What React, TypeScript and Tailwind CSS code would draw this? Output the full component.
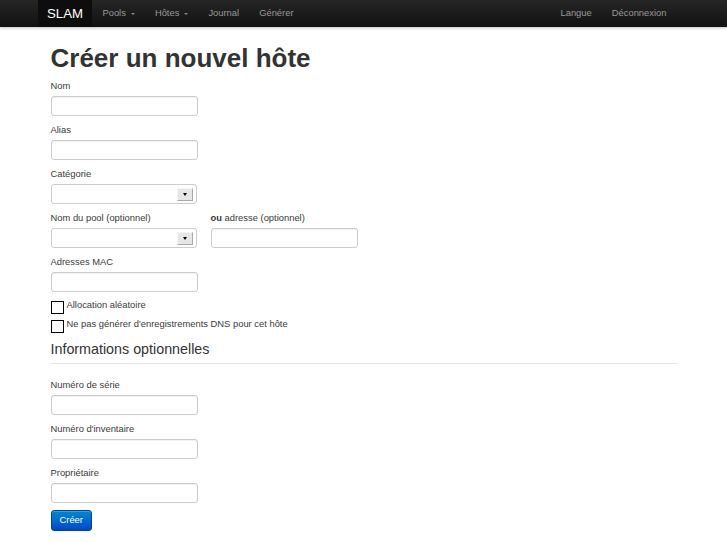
const navLeft = [
  { label: "Pools", caret: true },
  { label: "Hôtes", caret: true },
  { label: "Journal", caret: false },
  { label: "Générer", caret: false },
];

const navRight = ["Langue", "Déconnexion"];

const Caret = () => (
  <span className="ml-[5px] inline-block w-0 h-0 border-x-[2px] border-x-transparent border-t-[2px] border-t-[#888] mt-[1px]" />
);

const Label = ({ children }: { children: React.ReactNode }) => (
  <label className="block text-[9.4px] leading-[13px] mb-[4px] text-[#3a3a3a]">{children}</label>
);

const TextInput = () => (
  <input
    type="text"
    className="block w-[147px] h-[20px] border border-[#ccc] rounded-[3px] bg-white shadow-[inset_0_1px_1px_rgba(0,0,0,0.06)] outline-none"
  />
);

const SelectBox = () => (
  <div className="w-[146px] h-[20px] border border-[#ccc] rounded-[3px] bg-white flex items-center justify-end pr-[3px]">
    <span className="w-[16px] h-[13px] bg-[#e6e6e6] border border-[#f4f4f4] border-r-[#a8a8a8] border-b-[#a8a8a8] flex items-center justify-center">
      <span className="w-0 h-0 border-x-[2.5px] border-x-transparent border-t-[3px] border-t-black" />
    </span>
  </div>
);

const Field = ({ label, children }: { label: React.ReactNode; children: React.ReactNode }) => (
  <div className="mb-[7px]">
    <Label>{label}</Label>
    {children}
  </div>
);

const CheckRow = ({ text }: { text: string }) => (
  <div className="flex items-start h-[19px]">
    <span className="mt-[2px] w-[13px] h-[13px] border border-black bg-white shrink-0" />
    <span className="ml-[3px] -mt-[1px] text-[9.4px] leading-[13px] text-[#3a3a3a]">{text}</span>
  </div>
);

export default function App() {
  return (
    <div className="min-h-screen bg-white text-[#333] font-['Liberation_Sans',Arial,sans-serif]">
      {/* Top navbar */}
      <nav className="h-[27px] bg-gradient-to-b from-[#262626] to-[#111] shadow-[0_1px_3px_rgba(0,0,0,0.25)]">
        <div className="w-[626px] h-full mx-auto flex items-stretch">
          <a className="-ml-[13px] px-[9.5px] bg-[#0d0d0d] text-white text-[13.2px] flex items-center">SLAM</a>
          <ul className="flex items-stretch">
            {navLeft.map((item) => (
              <li key={item.label} className="px-[10px] flex items-center text-[9.4px] text-[#999]">
                {item.label}
                {item.caret && <Caret />}
              </li>
            ))}
          </ul>
          <ul className="ml-auto flex items-stretch">
            {navRight.map((item) => (
              <li key={item} className="px-[10px] flex items-center text-[9.4px] text-[#999]">
                {item}
              </li>
            ))}
          </ul>
        </div>
      </nav>

      <main className="w-[626px] mx-auto pt-[16px]">
        <h1 className="text-[26px] font-bold leading-[30px] mb-[6px] text-[#333]">Créer un nouvel hôte</h1>

        <Field label="Nom">
          <TextInput />
        </Field>
        <Field label="Alias">
          <TextInput />
        </Field>
        <Field label="Catégorie">
          <SelectBox />
        </Field>

        <div className="flex">
          <div className="w-[160px]">
            <Field label="Nom du pool (optionnel)">
              <SelectBox />
            </Field>
          </div>
          <Field
            label={
              <>
                <b>ou</b> adresse (optionnel)
              </>
            }
          >
            <TextInput />
          </Field>
        </div>

        <Field label="Adresses MAC">
          <TextInput />
        </Field>

        <div className="mt-[1px]">
          <CheckRow text="Allocation aléatoire" />
          <CheckRow text="Ne pas générer d'enregistrements DNS pour cet hôte" />
        </div>

        <h3 className="mt-[2px] text-[14.3px] leading-[20px] pb-[4px] border-b border-[#e5e5e5] text-[#333]">
          Informations optionnelles
        </h3>

        <div className="mt-[14px]">
          <Field label="Numéro de série">
            <TextInput />
          </Field>
          <Field label="Numéro d'inventaire">
            <TextInput />
          </Field>
          <Field label="Propriétaire">
            <TextInput />
          </Field>
        </div>

        <button className="block h-[21px] px-[8px] rounded-[3px] border border-[#0044aa] bg-gradient-to-b from-[#0088cc] to-[#0044cc] text-white text-[9.4px] shadow-[inset_0_1px_0_rgba(255,255,255,0.2)]">
          Créer
        </button>
      </main>
    </div>
  );
}
